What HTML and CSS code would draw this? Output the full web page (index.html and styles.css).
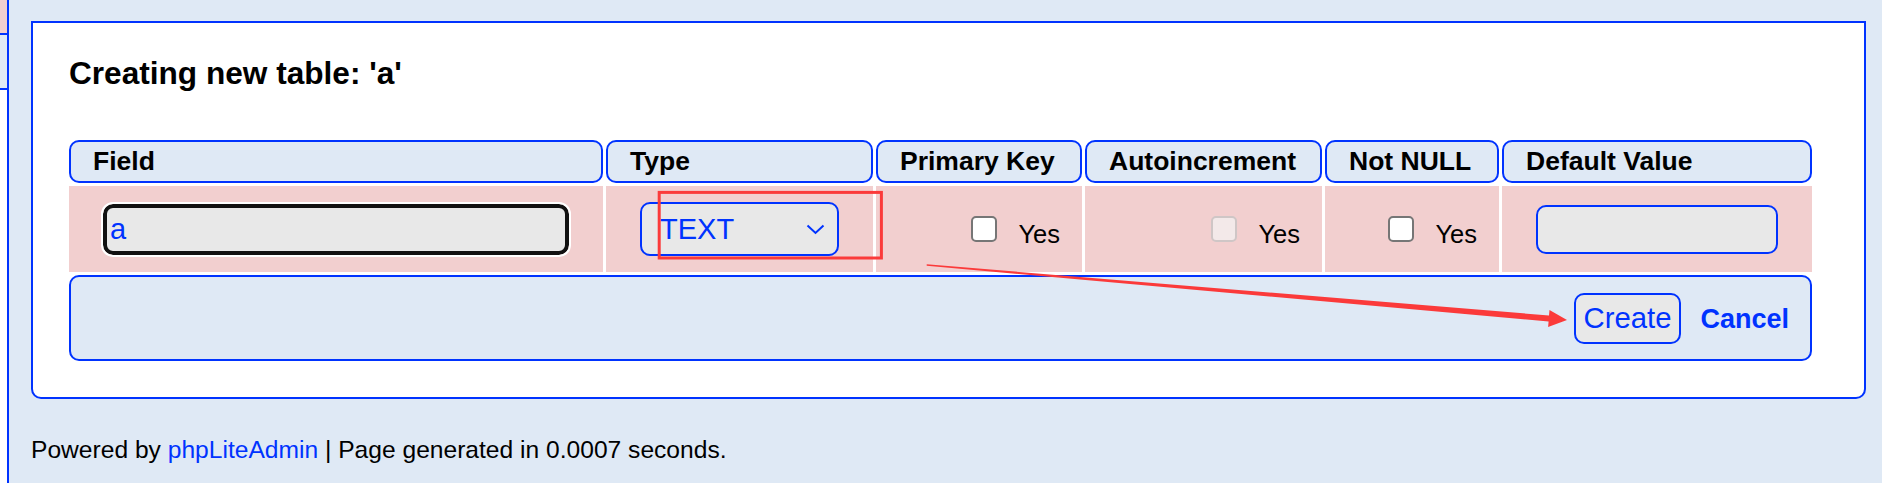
FILE: index.html
```html
<!DOCTYPE html>
<html lang="en">
<head>
    <meta charset="UTF-8">
    <meta name="viewport" content="width=device-width, initial-scale=1.0">
    <title>phpLiteAdmin — Create table</title>
    <link rel="stylesheet" href="styles.css">
</head>
<body>
    <div class="layout">
        <!-- phần còn lại của sidebar bên trái -->
        <aside class="sidebar">
            <div class="side-top"></div>
            <div class="side-mid"></div>
        </aside>

        <main class="main">
            <div class="panel">
                <h2 class="title">Creating new table: 'a'</h2>

                <div class="fields">
                    <div class="th">Field</div>
                    <div class="th">Type</div>
                    <div class="th">Primary Key</div>
                    <div class="th">Autoincrement</div>
                    <div class="th">Not NULL</div>
                    <div class="th">Default Value</div>

                    <div class="td">
                        <input class="field-name" type="text" value="a">
                    </div>
                    <div class="td">
                        <div class="select">
                            <span>TEXT</span>
                            <svg width="19" height="11" viewBox="0 0 19 11">
                                <polyline points="1.5,1.5 9.5,9 17.5,1.5" fill="none" stroke="#0033ff" stroke-width="2"/>
                            </svg>
                        </div>
                    </div>
                    <div class="td check">
                        <input type="checkbox"><span class="yes">Yes</span>
                    </div>
                    <div class="td check">
                        <input type="checkbox" disabled><span class="yes">Yes</span>
                    </div>
                    <div class="td check">
                        <input type="checkbox"><span class="yes">Yes</span>
                    </div>
                    <div class="td">
                        <input class="default-value" type="text">
                    </div>

                    <div class="actions">
                        <button class="create">Create</button>
                        <a class="cancel" href="#">Cancel</a>
                    </div>
                </div>
            </div>

            <div class="credit">
                Powered by <a href="#">phpLiteAdmin</a> | Page generated in 0.0007 seconds.
            </div>
        </main>
    </div>

    <!-- chú thích màu đỏ vẽ đè lên ảnh -->
    <svg class="marks" width="1882" height="483" viewBox="0 0 1882 483">
        <rect x="659.2" y="192.4" width="222.2" height="65.6" fill="none" stroke="#fb3a3a" stroke-width="3"/>
        <polygon fill="#fb3a3a" points="926.7,264.3 1549,315.5 1549.5,310 1567,320 1548.1,327 1548.6,321.5 926.7,265.7"/>
    </svg>
</body>
</html>
```

FILE: styles.css
```css
body {
    margin: 0;
    font-family: "Liberation Sans", Arial, sans-serif;
    background-color: #dfe9f5;
    color: #000;
}
.layout {
    display: flex;
    min-height: 100vh;
}
.sidebar {
    width: 7px;
    border-right: 2px solid #0033ff;
    background-color: #fff;
}
.side-top {
    height: 33px;
    background-color: #f2cfcf;
    border-bottom: 2px solid #0033ff;
}
.side-mid {
    height: 53px;
    background-color: #dfe9f5;
    border-bottom: 2px solid #0033ff;
}
.main {
    flex: 1;
    padding: 21px 16px 0 22px;
}
.panel {
    background-color: #fff;
    border: 2px solid #0033ff;
    border-radius: 0 0 10px 10px;
    padding: 32px 52px 36px 36px;
}
.title {
    margin: 0 0 48px;
    font-size: 31.6px;
    font-weight: bold;
}
.fields {
    display: grid;
    grid-template-columns: 534px 267px 206px 237px 174px 310px;
    gap: 3px;
}
.th {
    box-sizing: border-box;
    height: 43px;
    display: flex;
    align-items: center;
    padding: 0 22px;
    background-color: #dfe9f5;
    border: 2px solid #0033ff;
    border-radius: 10px;
    font-size: 26.5px;
    font-weight: bold;
    white-space: nowrap;
}
.td {
    height: 86px;
    display: flex;
    align-items: center;
    justify-content: center;
    background-color: #f2cfcf;
}
.td.check {
    justify-content: flex-end;
    padding-right: 22px;
}
.field-name {
    box-sizing: border-box;
    width: 466px;
    height: 51px;
    padding: 0 3px;
    border: 4px solid #111;
    border-radius: 10px;
    outline: 2px solid #fff;
    background-color: #e8e8e8;
    color: #0033ff;
    font-family: inherit;
    font-size: 29px;
}
.select {
    box-sizing: border-box;
    width: 199px;
    height: 54px;
    display: flex;
    align-items: center;
    justify-content: space-between;
    padding: 0 12px 0 18px;
    border: 2px solid #0033ff;
    border-radius: 10px;
    background-color: #e8e8e8;
    color: #0033ff;
    font-size: 29px;
}
.select svg {
    display: block;
}
.check input {
    appearance: none;
    box-sizing: border-box;
    width: 26px;
    height: 26px;
    margin: 0;
    border: 2px solid #767676;
    border-radius: 5px;
    background-color: #fff;
}
.check input:disabled {
    border-color: #cfc6c6;
    background-color: #f3e9e9;
}
.yes {
    margin: 11px 0 0 21px;
    font-size: 25.5px;
}
.default-value {
    box-sizing: border-box;
    width: 242px;
    height: 49px;
    border: 2px solid #0033ff;
    border-radius: 10px;
    background-color: #e8e8e8;
}
.actions {
    grid-column: 1 / -1;
    box-sizing: border-box;
    height: 86px;
    display: flex;
    align-items: center;
    justify-content: flex-end;
    gap: 19px;
    padding-right: 21px;
    background-color: #dfe9f5;
    border: 2px solid #0033ff;
    border-radius: 10px;
}
.create {
    height: 51px;
    padding: 0 8px;
    border: 2px solid #0033ff;
    border-radius: 10px;
    background-color: #e8e8e8;
    color: #0033ff;
    font-family: inherit;
    font-size: 29.3px;
}
.cancel {
    margin-top: 3px;
    color: #0033ff;
    font-size: 27px;
    font-weight: bold;
    text-decoration: none;
}
.credit {
    margin-top: 37px;
    font-size: 24.6px;
}
.credit a {
    color: #0033ff;
    text-decoration: none;
}
.marks {
    position: absolute;
    top: 0;
    left: 0;
    pointer-events: none;
}
```
